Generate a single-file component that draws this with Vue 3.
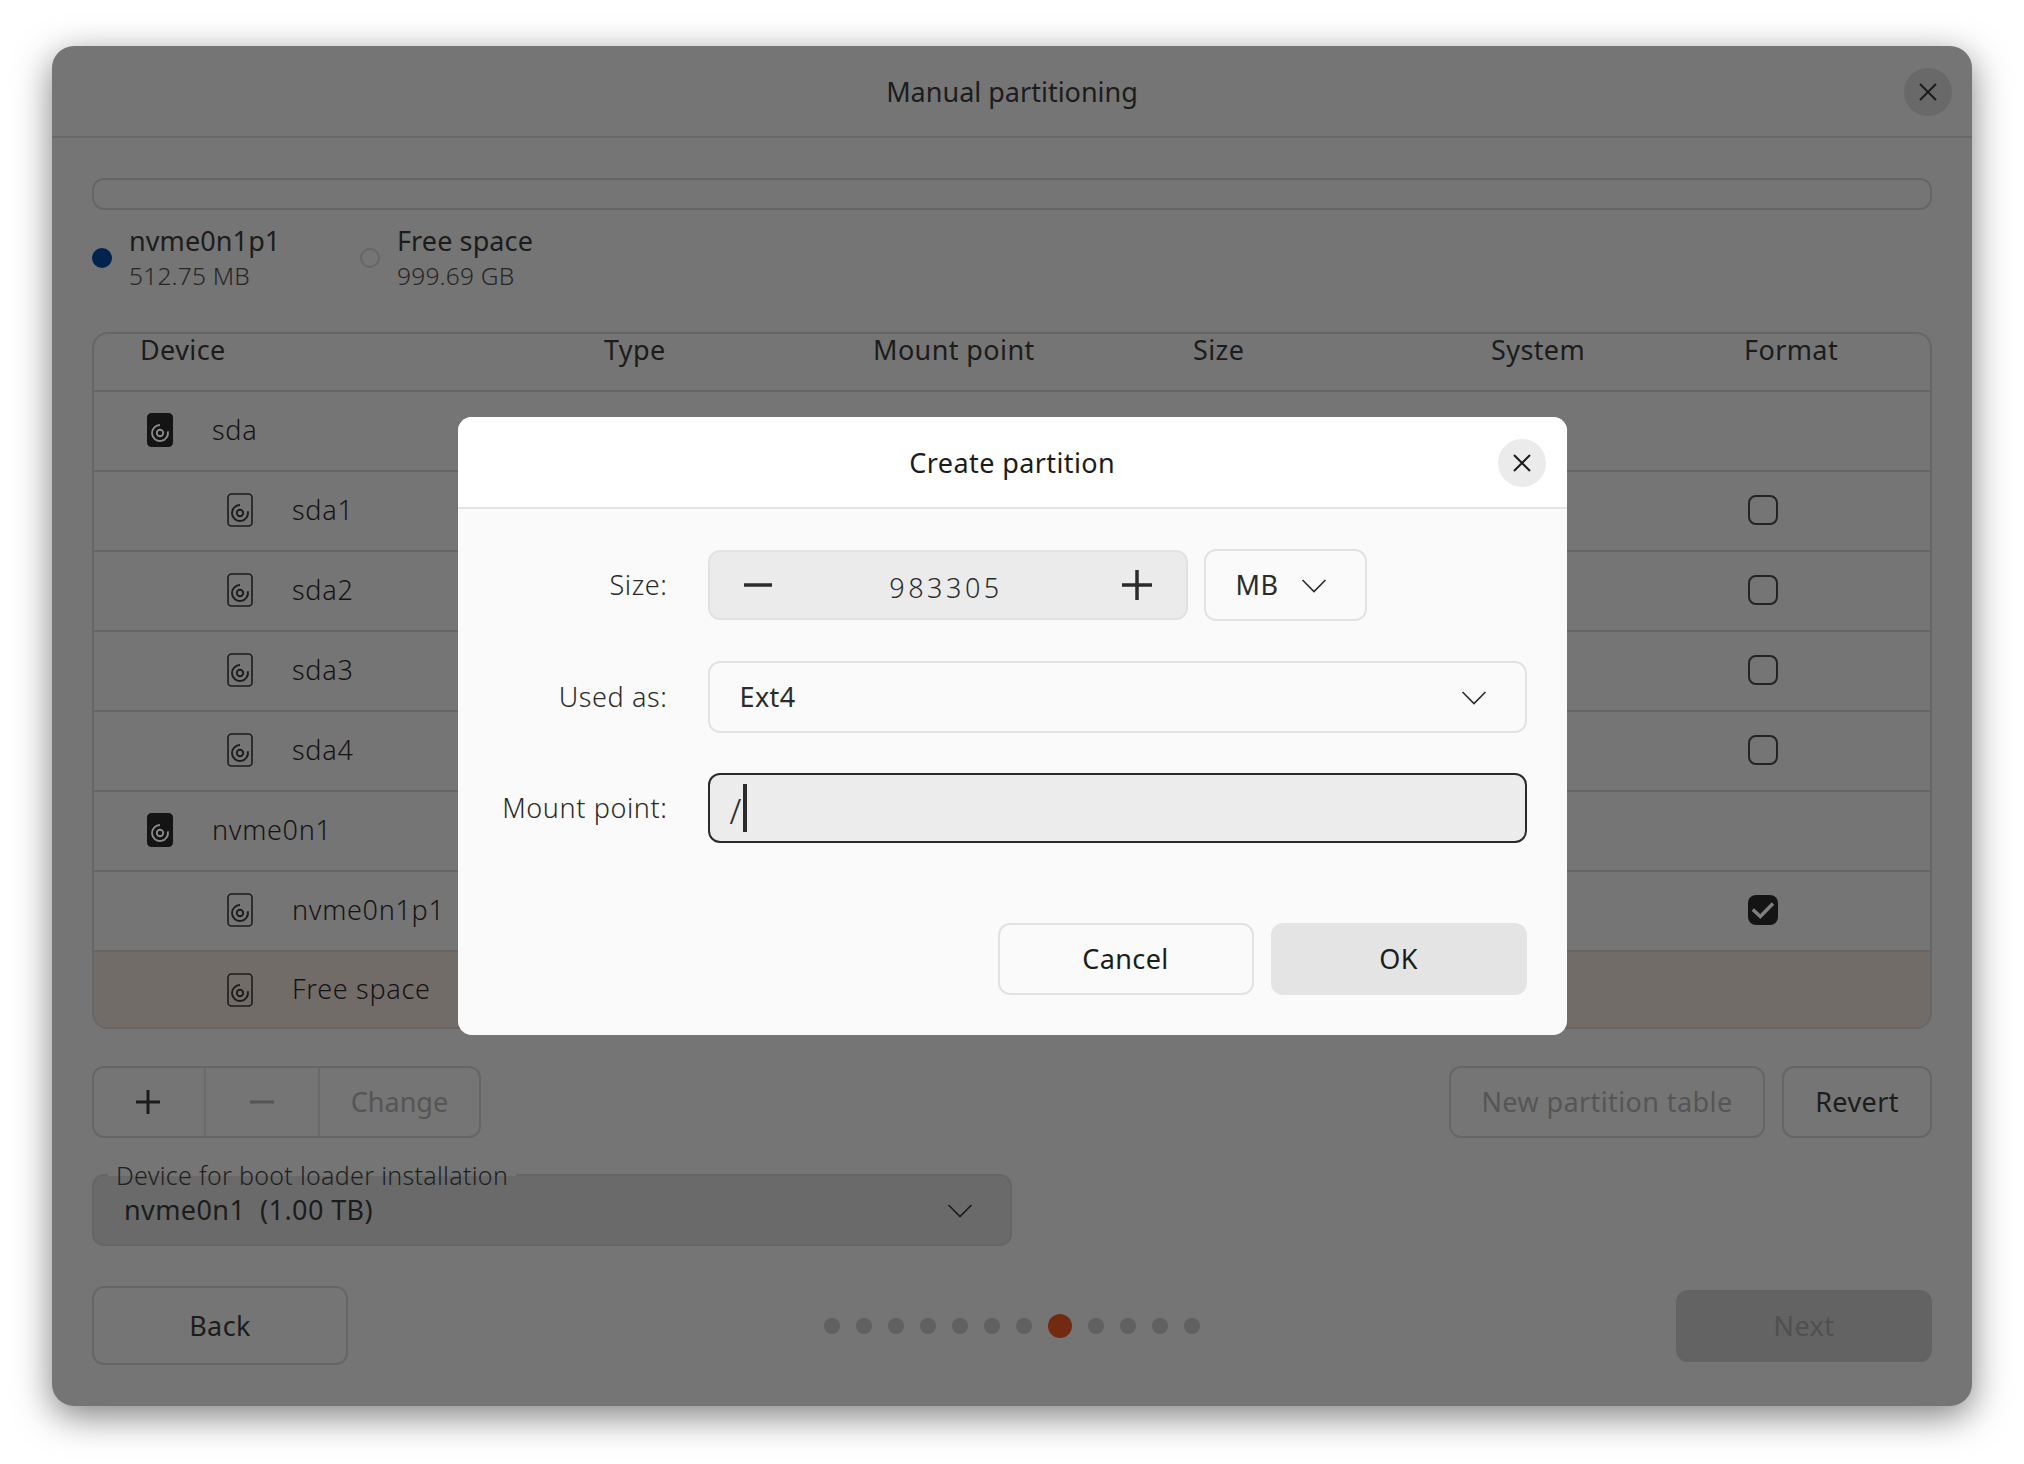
<script setup>
const headers = ['Device', 'Type', 'Mount point', 'Size', 'System', 'Format']
const rows = [
  { name: 'sda', disk: true },
  { name: 'sda1', check: 'off' },
  { name: 'sda2', check: 'off' },
  { name: 'sda3', check: 'off' },
  { name: 'sda4', check: 'off' },
  { name: 'nvme0n1', disk: true },
  { name: 'nvme0n1p1', check: 'on' },
  { name: 'Free space', selected: true }
]
const before = 7
const after = 4
</script>

<template>
  <div class="page">
    <div class="window">
      <header class="titlebar">
        <span class="title">Manual partitioning</span>
        <button class="close">
          <svg width="18" height="18" viewBox="0 0 18 18"><path d="M1 1 17 17M17 1 1 17" /></svg>
        </button>
      </header>

      <div class="content">
        <div class="bar"></div>

        <div class="legend">
          <div class="legend-item first">
            <span class="dot filled"></span>
            <div class="legend-text"><div class="lname">nvme0n1p1</div><div class="lsize">512.75 MB</div></div>
          </div>
          <div class="legend-item">
            <span class="dot hollow"></span>
            <div class="legend-text"><div class="lname">Free space</div><div class="lsize">999.69 GB</div></div>
          </div>
        </div>

        <div class="table">
          <div class="thead">
            <span v-for="h in headers" :key="h" class="th">{{ h }}</span>
          </div>
          <div
            v-for="r in rows"
            :key="r.name"
            class="row"
            :class="{ selected: r.selected, child: !r.disk }"
          >
            <svg class="disk" width="26" height="34" viewBox="0 0 26 34">
              <rect x="1" y="1" width="24" height="32" rx="3.5" :class="r.disk ? 'fill' : 'line'" />
              <path d="M13 12a8 8 0 1 0 7.800 6.200" class="ring" :class="{ light: r.disk }" />
              <circle cx="13" cy="20" r="3.2" class="ring" :class="{ light: r.disk }" />
            </svg>
            <span class="name">{{ r.name }}</span>
            <span v-if="r.check" class="check" :class="{ on: r.check === 'on' }">
              <svg v-if="r.check === 'on'" width="30" height="30" viewBox="0 0 30 30"><path d="M4.800 14.500 12.300 21.500 25 8.500" /></svg>
            </span>
          </div>
        </div>

        <div class="tools">
          <div class="group">
            <button class="seg plus">
              <svg width="26" height="26" viewBox="0 0 26 26"><path d="M13 1V25M1 13H25" /></svg>
            </button>
            <button class="seg minus">
              <svg width="26" height="26" viewBox="0 0 26 26"><path d="M1 13H25" /></svg>
            </button>
            <button class="seg change">Change</button>
          </div>
          <div class="tools-right">
            <button class="btn newtable">New partition table</button>
            <button class="btn revert">Revert</button>
          </div>
        </div>

        <div class="boot">
          <span class="boot-label">Device for boot loader installation</span>
          <span class="boot-value">nvme0n1&nbsp; (1.00 TB)</span>
          <svg class="chev" width="26" height="15" viewBox="0 0 26 15"><path d="M1.500 2 13 13.500 24.500 2" /></svg>
        </div>

        <div class="nav">
          <button class="btn back">Back</button>
          <div class="dots">
            <span v-for="n in before" :key="'b' + n" class="pip"></span>
            <span class="pip active"></span>
            <span v-for="n in after" :key="'a' + n" class="pip"></span>
          </div>
          <button class="next">Next</button>
        </div>
      </div>

      <div class="dialog">
        <header class="dlg-head">
          <span class="dlg-title">Create partition</span>
          <button class="close dlg-close">
            <svg width="18" height="18" viewBox="0 0 18 18"><path d="M1 1 17 17M17 1 1 17" /></svg>
          </button>
        </header>
        <div class="dlg-body">
          <div class="form">
            <label class="lbl">Size:</label>
            <div class="size-line">
              <div class="stepper">
                <svg class="sym" width="30" height="30" viewBox="0 0 30 30"><path d="M1 15H29" /></svg>
                <span class="num">983305</span>
                <svg class="sym" width="30" height="30" viewBox="0 0 30 30"><path d="M15 0V30M0 15H30" /></svg>
              </div>
              <div class="unit">
                <span>MB</span>
                <svg class="chev" width="26" height="15" viewBox="0 0 26 15"><path d="M1.500 2 13 13.500 24.500 2" /></svg>
              </div>
            </div>
            <label class="lbl">Used as:</label>
            <div class="select">
              <span>Ext4</span>
              <svg class="chev" width="26" height="15" viewBox="0 0 26 15"><path d="M1.500 2 13 13.500 24.500 2" /></svg>
            </div>
            <label class="lbl">Mount point:</label>
            <div class="input"><span class="slash">/</span><span class="caret"></span></div>
          </div>
          <div class="dlg-actions">
            <button class="dbtn cancel">Cancel</button>
            <button class="dbtn ok">OK</button>
          </div>
        </div>
      </div>
    </div>
  </div>
</template>

<style>
html, body { margin: 0; background: #fff; }
</style>

<style scoped>
* { box-sizing: border-box; }
.page {
  width: 2024px;
  height: 1464px;
  padding: 46px 52px;
  background: #fff;
  font-family: "Noto Sans", sans-serif;
  font-size: 27px;
  font-weight: 400;
  letter-spacing: .4px;
  color: #1c1c1c;
  overflow: hidden;
}
button { font: inherit; letter-spacing: inherit; color: inherit; background: none; border: 0; padding: 0; }
svg path { fill: none; }
.window {
  position: relative;
  width: 1920px;
  height: 1360px;
  background: #757575;
  border-radius: 22px;
  box-shadow: 0 10px 36px rgba(0, 0, 0, .5);
}
.titlebar {
  position: relative;
  height: 92px;
  border-bottom: 2px solid #696969;
  display: flex;
  align-items: center;
  justify-content: center;
}
.title { letter-spacing: 0; }
.close {
  position: absolute;
  right: 20px;
  top: 22px;
  width: 48px;
  height: 48px;
  border-radius: 50%;
  background: #696969;
  display: flex;
  align-items: center;
  justify-content: center;
}
.close path { stroke: #1c1c1c; stroke-width: 2; }
.content { padding: 40px 40px 0; }
.bar {
  height: 32px;
  border: 2px solid #666;
  border-radius: 12px;
}
.legend {
  display: flex;
  align-items: center;
  margin-top: 12px;
  height: 72px;
}
.legend-item { display: flex; align-items: center; gap: 17px; }
.legend-item.first { width: 268px; }
.dot { width: 20px; height: 20px; border-radius: 50%; flex: none; }
.dot.filled { background: #03234f; }
.dot.hollow { border: 2px solid #666; }
.lname { line-height: 36px; letter-spacing: .1px; }
.lsize { font-size: 24.5px; font-weight: 300; line-height: 34px; color: #262626; letter-spacing: .2px; }
.table {
  margin-top: 38px;
  height: 697px;
  border: 2px solid #666;
  border-radius: 16px;
  overflow: hidden;
}
.thead {
  height: 58px;
  border-bottom: 2px solid #666;
  padding-left: 46px;
  display: grid;
  grid-template-columns: 464px 269px 320px 298px 253px 1fr;
  line-height: 32px;
}
.row {
  height: 80px;
  border-bottom: 2px solid #666;
  display: flex;
  align-items: center;
  padding-left: 53px;
  padding-bottom: 2px;
}
.row:last-child { border-bottom: 0; height: 75px; padding-bottom: 0; }
.row.child { padding-left: 133px; }
.row.selected { background: #726c69; }
.disk { flex: none; }
.disk .fill { fill: #141414; stroke: #141414; stroke-width: 2; }
.disk .line { fill: none; stroke: #1c1c1c; stroke-width: 1.6; }
.disk .ring { fill: none; stroke: #1c1c1c; stroke-width: 1.9; }
.disk .ring.light { stroke: #8a8a8a; }
.name { margin-left: 39px; margin-top: -2px; font-weight: 300; letter-spacing: .7px; color: #141414; }
.check {
  margin-left: auto;
  margin-right: 152px;
  width: 30px;
  height: 30px;
  border: 2px solid #232323;
  border-radius: 8px;
}
.check.on { background: #141414; border: 0; }
.check path { stroke: #7e7e7e; stroke-width: 3.5; }
.check svg { display: block; }
.tools {
  margin-top: 37px;
  display: flex;
  justify-content: space-between;
}
.group {
  width: 389px;
  height: 72px;
  border: 2px solid #666;
  border-radius: 12px;
  display: flex;
}
.seg { display: flex; align-items: center; justify-content: center; border-right: 2px solid #6a6a6a; height: 100%; }
.seg.plus { width: 112px; padding-right: 3px; }
.seg.minus { width: 114px; }
.seg.change { flex: 1; border-right: 0; color: #555; letter-spacing: 0; padding-bottom: 2px; }
.plus path { stroke: #1c1c1c; stroke-width: 3; }
.minus path { stroke: #555; stroke-width: 3; }
.tools-right { display: flex; gap: 17px; }
.btn {
  height: 72px;
  border: 2px solid #666;
  border-radius: 12px;
  padding-bottom: 2px;
}
.newtable { width: 316px; color: #555; }
.revert { width: 150px; }
.boot {
  position: relative;
  margin-top: 36px;
  width: 920px;
  height: 72px;
  background: #6a6a6a;
  border: 2px solid #666;
  border-radius: 12px;
  display: flex;
  align-items: center;
  justify-content: space-between;
  padding: 0 37px 0 30px;
}
.boot-value { margin-top: -2px; }
.boot-label {
  position: absolute;
  left: 14px;
  top: -16px;
  height: 32px;
  padding: 0 8px;
  font-size: 25px;
  font-weight: 300;
  letter-spacing: .3px;
  line-height: 30px;
  color: #1f1f1f;
  background: linear-gradient(#757575 50%, transparent 50%);
}
.chev path { stroke: #1c1c1c; stroke-width: 1.6; }
.nav {
  margin-top: 40px;
  display: flex;
  align-items: center;
  justify-content: space-between;
  position: relative;
  height: 79px;
}
.back { width: 256px; height: 79px; padding-bottom: 0; }
.dots {
  position: absolute;
  left: 732px;
  display: flex;
  align-items: center;
  gap: 16px;
}
.pip { width: 16px; height: 16px; border-radius: 50%; background: #616161; }
.pip.active { width: 24px; height: 24px; background: #722a10; }
.next {
  width: 256px;
  height: 72px;
  background: #636363;
  border-radius: 12px;
  color: #505050;
}
.dialog {
  position: absolute;
  left: 406px;
  top: 371px;
  width: 1108.5px;
  height: 618px;
  border-radius: 14px;
  overflow: hidden;
  background: #fafafa;
  display: flex;
  flex-direction: column;
}
.dlg-head {
  position: relative;
  height: 92px;
  background: #fff;
  border-bottom: 2px solid #e4e4e4;
  display: flex;
  align-items: center;
  justify-content: center;
}
.dlg-close { background: #ebebeb; right: 20.5px; top: 22px; }
.dlg-body {
  flex: 1;
  padding: 41px 40px 40px 0;
  display: flex;
  flex-direction: column;
  justify-content: space-between;
}
.form {
  display: grid;
  grid-template-columns: 209.5px 1fr;
  column-gap: 40px;
  row-gap: 40px;
  align-items: center;
  color: #2b2b2b;
}
.lbl { text-align: right; color: #2b2b2b; font-weight: 300; letter-spacing: .6px; padding-bottom: 2px; }
.size-line { display: flex; gap: 16px; }
.stepper {
  width: 480px;
  height: 70px;
  background: #ebebeb;
  border: 2px solid #e2e2e2;
  border-radius: 12px;
  display: flex;
  align-items: center;
  justify-content: space-between;
  padding: 0 33px;
}
.sym path { stroke: #2b2b2b; stroke-width: 3.5; }
.num { font-weight: 300; letter-spacing: 3.5px; padding-top: 5px; margin-right: 3px; }
.unit {
  width: 163px;
  height: 72px;
  margin-top: -1px;
  border: 2px solid #e2e2e2;
  border-radius: 12px;
  display: flex;
  align-items: center;
  gap: 24px;
  padding-left: 30px;
  padding-bottom: 2px;
}
.unit .chev path, .select .chev path { stroke: #2b2b2b; }
.unit .chev { margin-top: 2px; margin-left: -1px; }
.select {
  height: 72px;
  border: 2px solid #e2e2e2;
  border-radius: 12px;
  display: flex;
  align-items: center;
  justify-content: space-between;
  padding: 0 38px 2px 30px;
}
.select .chev { margin-top: 2px; }
.input {
  height: 70px;
  background: #ececec;
  border: 2.5px solid #2b2b2b;
  border-radius: 12px;
  display: flex;
  align-items: center;
  padding-left: 20px;
}
.slash { font-size: 34px; font-weight: 300; line-height: 1; padding-top: 6px; }
.caret { width: 4px; height: 48px; background: #2b2b2b; margin-left: 1px; }
.dlg-actions { display: flex; justify-content: flex-end; gap: 17px; }
.dbtn {
  width: 256px;
  height: 72px;
  border-radius: 12px;
  padding-bottom: 2px;
}
.dbtn.cancel { background: #fafafa; border: 2px solid #e2e2e2; }
.dbtn.ok { background: #e4e4e4; }
</style>
